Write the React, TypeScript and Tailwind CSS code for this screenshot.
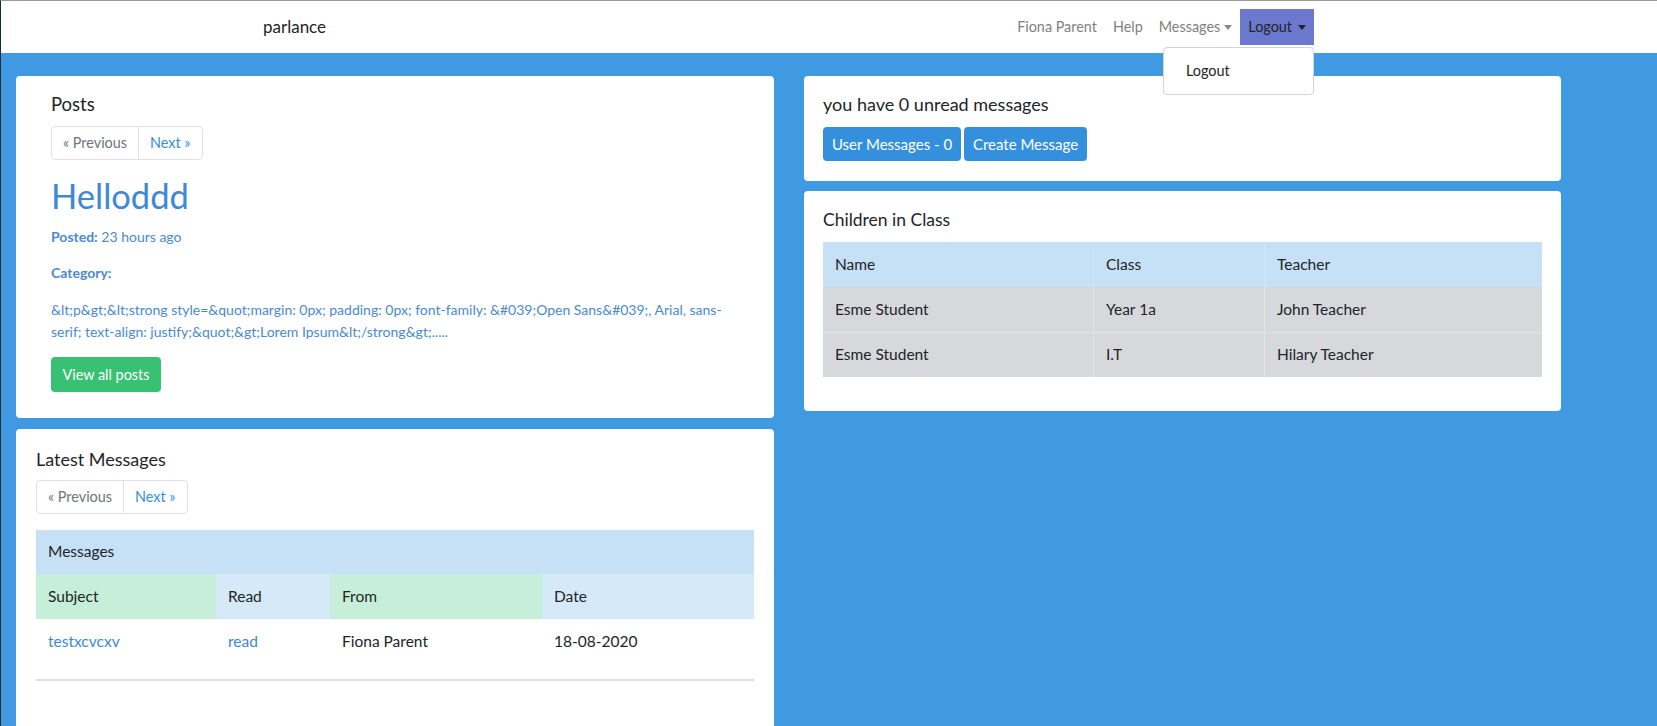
import React from "react";

const font = { fontFamily: "Lato, 'Noto Sans', sans-serif" };

function Pager() {
  return (
    <div className="flex h-[34px] w-fit rounded-[4px] border border-[#dee2e6] text-[14.4px]">
      <span className="flex items-center px-[11px] text-[#6c757d]">« Previous</span>
      <span className="flex items-center border-l border-[#dee2e6] px-[11px] text-[#3490dc]">Next »</span>
    </div>
  );
}

export default function App() {
  return (
    <div className="min-h-[726px] w-[1657px] border-l border-t border-l-[#0d2f38] border-t-[#9a9a9a] bg-[#3f9ae2] text-[#212529]" style={font}>
      {/* navbar */}
      <div className="relative flex h-[52px] items-center bg-white">
        <div className="ml-[262px] text-[17px] text-[#212529]">parlance</div>
        <div className="ml-auto mr-[343px] flex items-center text-[14.4px] text-[#7f7f7f]">
          <span className="px-[8px]">Fiona Parent</span>
          <span className="px-[8px]">Help</span>
          <span className="flex items-center gap-[4px] px-[8px]">
            Messages
            <span className="mt-[1px] h-0 w-0 border-x-[4px] border-t-[5px] border-x-transparent border-t-[#888]" />
          </span>
          <div className="relative">
            <span className="flex h-[36px] items-center gap-[6px] bg-[#6b78ce] px-[8px] text-[#212529]">
              Logout
              <span className="mt-[1px] h-0 w-0 border-x-[4px] border-t-[5px] border-x-transparent border-t-[#212529]" />
            </span>
            <div className="absolute right-0 top-[38px] z-10 w-[151px] rounded-[4px] border border-[#d3d3d3] bg-white py-[8px] text-[#212529]">
              <div className="px-[22px] py-[4px]">Logout</div>
            </div>
          </div>
        </div>
      </div>

      {/* main */}
      <div className="flex gap-[30px] pl-[15px] pt-[23px]">
        <div className="flex w-[758px] flex-col gap-[11px]">
          {/* posts */}
          <div className="h-[342px] rounded-[4px] bg-white px-[35px] pt-[15px]">
            <div className="text-[18.5px] leading-[26px]">Posts</div>
            <div className="mt-[9px]"><Pager /></div>
            <div className="mt-[12px] text-[34.5px] leading-[48px] text-[#3e88d6]">Helloddd</div>
            <div className="mt-[6px] text-[14px] text-[#4a8ad3]"><b className="font-bold">Posted:</b> 23 hours ago</div>
            <div className="mt-[15px] text-[14px] font-bold text-[#4a8ad3]">Category:</div>
            <div className="mt-[16px] text-[14px] leading-[22px] text-[#4a8ad3]">
              &amp;lt;p&amp;gt;&amp;lt;strong style=&amp;quot;margin: 0px; padding: 0px; font-family: &amp;#039;Open Sans&amp;#039;, Arial, sans-serif; text-align: justify;&amp;quot;&amp;gt;Lorem Ipsum&amp;lt;/strong&amp;gt;.....
            </div>
            <div className="mt-[14px] flex h-[35px] w-[110px] items-center justify-center rounded-[4px] bg-[#38c172] text-[14.4px] text-white">View all posts</div>
          </div>
          {/* latest messages */}
          <div className="h-[300px] rounded-t-[4px] bg-white px-[20px] pt-[17px]">
            <div className="text-[18px] leading-[26px]">Latest Messages</div>
            <div className="mt-[8px]"><Pager /></div>
            <div className="mt-[16px] text-[15.5px]">
              <div className="flex h-[44px] items-center bg-[#c6e0f5] px-[12px]">Messages</div>
              <div className="flex h-[45px]">
                <div className="flex w-[180px] items-center bg-[#c7eed8] px-[12px]">Subject</div>
                <div className="flex w-[114px] items-center bg-[#d6e9f9] px-[12px]">Read</div>
                <div className="flex w-[212px] items-center bg-[#c7eed8] px-[12px]">From</div>
                <div className="flex flex-1 items-center bg-[#d6e9f9] px-[12px]">Date</div>
              </div>
              <div className="flex h-[45px]">
                <div className="flex w-[180px] items-center px-[12px] text-[#3e88d6]">testxcvcxv</div>
                <div className="flex w-[114px] items-center px-[12px] text-[#3e88d6]">read</div>
                <div className="flex w-[212px] items-center px-[12px]">Fiona Parent</div>
                <div className="flex flex-1 items-center px-[12px]">18-08-2020</div>
              </div>
              <div className="mt-[15px] border-t-2 border-[#dee2e6]" />
            </div>
          </div>
        </div>

        <div className="flex w-[757px] flex-col gap-[10px]">
          <div className="h-[105px] rounded-[4px] bg-white px-[19px] pt-[15px]">
            <div className="text-[18px] leading-[26px]">you have 0 unread messages</div>
            <div className="mt-[10px] flex gap-[3px] text-[15px] text-white">
              <div className="flex h-[34px] w-[138px] items-center justify-center rounded-[4px] bg-[#3490dc]">User Messages - 0</div>
              <div className="flex h-[34px] w-[123px] items-center justify-center rounded-[4px] bg-[#3490dc]">Create Message</div>
            </div>
          </div>
          <div className="h-[220px] rounded-[4px] bg-white px-[19px] pt-[16px]">
            <div className="text-[17.5px] leading-[26px]">Children in Class</div>
            <div className="mt-[9px] w-[719px] text-[15.5px]">
              <div className="flex h-[45px] bg-[#c6e0f5]">
                <div className="flex w-[270px] items-center px-[12px]">Name</div>
                <div className="flex w-[171px] items-center border-l border-[#d2e6f7] px-[12px]">Class</div>
                <div className="flex flex-1 items-center border-l border-[#d2e6f7] px-[12px]">Teacher</div>
              </div>
              <div className="flex h-[45px] bg-[#d6d8db]">
                <div className="flex w-[270px] items-center px-[12px]">Esme Student</div>
                <div className="flex w-[171px] items-center border-l border-[#e2e3e5] px-[12px]">Year 1a</div>
                <div className="flex flex-1 items-center border-l border-[#e2e3e5] px-[12px]">John Teacher</div>
              </div>
              <div className="flex h-[45px] border-t border-[#e2e3e5] bg-[#d6d8db]">
                <div className="flex w-[270px] items-center px-[12px]">Esme Student</div>
                <div className="flex w-[171px] items-center border-l border-[#e2e3e5] px-[12px]">I.T</div>
                <div className="flex flex-1 items-center border-l border-[#e2e3e5] px-[12px]">Hilary Teacher</div>
              </div>
            </div>
          </div>
        </div>
      </div>
    </div>
  );
}
